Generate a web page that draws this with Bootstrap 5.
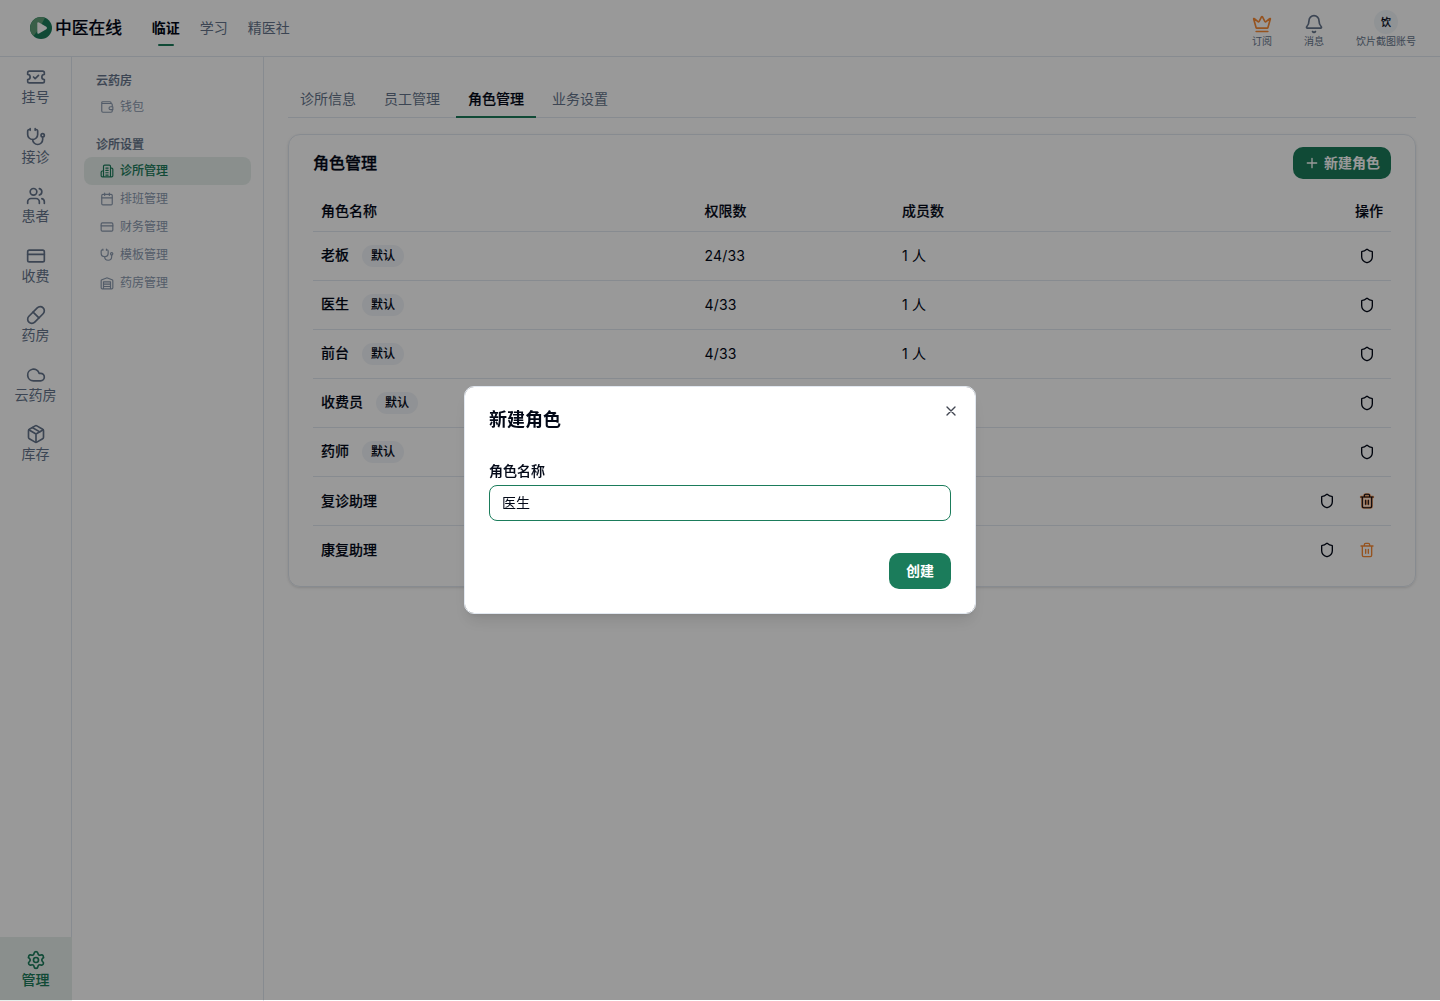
<!DOCTYPE html>
<html lang="zh-CN">
<head>
<meta charset="utf-8">
<meta name="viewport" content="width=device-width, initial-scale=1">
<title>角色管理 - 中医在线</title>
<link href="https://cdn.jsdelivr.net/npm/bootstrap@5.3.0/dist/css/bootstrap.min.css" rel="stylesheet">
<style>
:root{--line:#e2e8f0;--ink:#020817;--mute:#64748b;--brand:#1b7c5b;--tint:#e7efec}
body{font-family:Inter,"Noto Sans CJK SC",sans-serif;font-size:14px;line-height:20px;color:var(--ink);height:1001px;overflow:hidden;background:#fff}
.ico{fill:none;stroke:currentColor;stroke-width:2;stroke-linecap:round;stroke-linejoin:round;width:20px;height:20px;flex:none;display:block}
.ico-14{width:14px;height:14px}.ico-16{width:16px;height:16px}
.fw-mid{font-weight:500;-webkit-text-stroke:.15px}
.topbar{height:57px;border-bottom:1px solid var(--line);padding:0 24px 0 30px}
.brand-name{font-size:16.8px;font-weight:500;-webkit-text-stroke:.15px;line-height:24px;margin-left:3px}
.top-nav{gap:20px;margin-left:29.5px}
.top-nav a{color:var(--mute);text-decoration:none;position:relative;padding:0}
.top-nav a.on{color:var(--ink);font-weight:700}
.top-nav a.on::after{content:"";position:absolute;left:6px;right:6px;bottom:-8px;height:2px;border-radius:1px;background:var(--brand)}
.tool{font-size:10px;line-height:14px;color:var(--mute);margin-top:5px}
.tool + .tool{margin-left:32px}
.tool.tool-user{margin-top:1px}
.crown{color:#f98a35}
.face{width:24px;height:24px;border-radius:50%;background:#f1f5f9;color:var(--ink);font-size:10px}
.rail{width:72px;border-right:1px solid var(--line);color:var(--mute)}
.rail-item{height:59.5px;padding-top:10px;line-height:19.6px}
.rail-item.on{height:64px;padding-top:13px;padding-right:1px;background:var(--tint);color:var(--brand);font-weight:500;-webkit-text-stroke:.1px;margin-right:-1px}
.subnav{width:192px;border-right:1px solid var(--line);padding:12px;font-size:12px}
.subnav h6{font-size:12px;line-height:24px;font-weight:500;-webkit-text-stroke:.2px;color:var(--mute);margin:0;padding-left:12px}
.subnav h6.second{margin-top:12px}
.subnav a{height:28px;padding-left:16px;gap:6px;border-radius:8px;color:#8b9aaf;text-decoration:none}
.subnav a.on{background:var(--tint);color:var(--brand);font-weight:500;-webkit-text-stroke:.1px}
.content-pane{padding:24px}
.page-tabs{gap:4px;height:37px;border-bottom:1px solid var(--line)}
.page-tabs .nav-link{padding:8px 12px;height:37px;color:var(--mute);border-bottom:2px solid transparent}
.page-tabs .nav-link.active{color:var(--ink);font-weight:500;-webkit-text-stroke:.2px;border-bottom-color:var(--brand)}
.role-card{margin-top:16px;border:1px solid var(--line);border-radius:12px;padding:12px 24px;box-shadow:0 1px 3px rgba(0,0,0,.1),0 1px 2px -1px rgba(0,0,0,.1)}
.role-card h5{font-size:16px;line-height:24px;font-weight:500;-webkit-text-stroke:.3px}
.btn-brand{background:var(--brand);color:#fff;font-size:14px;line-height:20px;font-weight:600;border:0;border-radius:10px}
.btn-new{width:98px;height:32px;gap:4px;padding:0}
.role-table{margin:12px 0 0;table-layout:fixed;--bs-table-bg:transparent;--bs-table-color:var(--ink);color:var(--ink)}
.role-table th,.role-table td{padding:0 8px;height:49px;vertical-align:middle;border-bottom:1px solid var(--line)}
.role-table th{height:41px;font-weight:500;-webkit-text-stroke:.15px}
.role-table thead tr>th{height:40px}
.role-table tbody tr:last-child td{border-bottom:0;height:49px}
.role-table td.num{letter-spacing:.17px}
.role-table .tag{border-radius:11px;height:22px;padding:0 9px;background:#f1f4f8;font-size:12px;line-height:21px;margin:2px 0 0 13px;font-weight:500;-webkit-text-stroke:.1px}
.role-name{line-height:20px;margin-top:-2px}
.acts{gap:24px;padding-right:8px}
.scrim{height:1000px;background:#000}
.scrim.show{opacity:.4}
.role-modal{height:1000px;--bs-modal-width:512px;font-size:14px}
.role-modal .modal-dialog{height:1000px;min-height:0;margin:0 auto}
.role-modal .modal-content{height:228px;padding:24px;border:1px solid var(--line);border-radius:10px;color:var(--ink);box-shadow:0 10px 15px -3px rgba(0,0,0,.1),0 4px 6px -4px rgba(0,0,0,.1)}
.role-modal h2{font-size:18px;line-height:18px;font-weight:600;margin:0}
.role-modal .form-label{margin:32px 0 4px;font-weight:500;-webkit-text-stroke:.15px}
.role-modal .form-control{height:36px;border:1px solid var(--brand);border-radius:8px;padding:0 12px 2px;font-size:14px;color:var(--ink)}
.shut{position:absolute;right:16px;top:16px;border:0;background:none;padding:0;color:var(--ink);opacity:.75}
.btn-make{width:62px;height:36px;margin-top:32px;padding:0}
</style>
<script src="https://cdn.jsdelivr.net/npm/bootstrap@5.3.0/dist/js/bootstrap.bundle.min.js"></script>
</head>
<body class="d-flex flex-column">
<svg class="d-none" xmlns="http://www.w3.org/2000/svg">
<symbol id="ticket" viewBox="0 0 24 24"><path d="M2 9a3 3 0 1 1 0 6v2a2 2 0 0 0 2 2h16a2 2 0 0 0 2-2v-2a3 3 0 1 1 0-6V7a2 2 0 0 0-2-2H4a2 2 0 0 0-2 2Z"/><path d="m9 12 2 2 4-4"/></symbol>
<symbol id="stetho" viewBox="0 0 24 24"><path d="M11 2v2M5 2v2M5 3H4a2 2 0 0 0-2 2v4a6 6 0 0 0 12 0V5a2 2 0 0 0-2-2h-1"/><path d="M8 15a6 6 0 0 0 12 0v-3"/><circle cx="20" cy="10" r="2"/></symbol>
<symbol id="users" viewBox="0 0 24 24"><path d="M16 21v-2a4 4 0 0 0-4-4H6a4 4 0 0 0-4 4v2"/><circle cx="9" cy="7" r="4"/><path d="M22 21v-2a4 4 0 0 0-3-3.87M16 3.13a4 4 0 0 1 0 7.75"/></symbol>
<symbol id="credit" viewBox="0 0 24 24"><rect width="20" height="14" x="2" y="5" rx="2"/><path d="M2 10h20"/></symbol>
<symbol id="pill" viewBox="0 0 24 24"><path d="m10.5 20.5 10-10a4.95 4.95 0 1 0-7-7l-10 10a4.95 4.95 0 1 0 7 7Z"/><path d="m8.5 8.5 7 7"/></symbol>
<symbol id="cloud" viewBox="0 0 24 24"><path d="M17.5 19H9a7 7 0 1 1 6.71-9h1.79a4.5 4.5 0 1 1 0 9Z"/></symbol>
<symbol id="package" viewBox="0 0 24 24"><path d="m7.5 4.27 9 5.15"/><path d="M21 8a2 2 0 0 0-1-1.73l-7-4a2 2 0 0 0-2 0l-7 4A2 2 0 0 0 3 8v8a2 2 0 0 0 1 1.73l7 4a2 2 0 0 0 2 0l7-4A2 2 0 0 0 21 16Z"/><path d="m3.3 7 8.7 5 8.7-5M12 22V12"/></symbol>
<symbol id="gear" viewBox="0 0 24 24"><path d="M9.671 4.136a2.34 2.34 0 0 1 4.659 0 2.34 2.34 0 0 0 3.319 1.915 2.34 2.34 0 0 1 2.33 4.033 2.34 2.34 0 0 0 0 3.831 2.34 2.34 0 0 1-2.33 4.033 2.34 2.34 0 0 0-3.319 1.915 2.34 2.34 0 0 1-4.659 0 2.34 2.34 0 0 0-3.32-1.915 2.34 2.34 0 0 1-2.33-4.033 2.34 2.34 0 0 0 0-3.831A2.34 2.34 0 0 1 6.35 6.051a2.34 2.34 0 0 0 3.319-1.915"/><circle cx="12" cy="12" r="3"/></symbol>
<symbol id="crown" viewBox="0 0 24 24"><path d="M11.562 3.266a.5.5 0 0 1 .876 0L15.39 8.87a1 1 0 0 0 1.516.294L21.183 5.5a.5.5 0 0 1 .798.519l-2.834 10.246a1 1 0 0 1-.956.734H5.81a1 1 0 0 1-.957-.734L2.02 6.02a.5.5 0 0 1 .798-.519l4.276 3.664a1 1 0 0 0 1.516-.294zM5 21h14"/></symbol>
<symbol id="bell" viewBox="0 0 24 24"><path d="M10.268 21a2 2 0 0 0 3.464 0M3.262 15.326A1 1 0 0 0 4 17h16a1 1 0 0 0 .74-1.673C19.41 13.956 18 12.499 18 8A6 6 0 0 0 6 8c0 4.499-1.411 5.956-2.738 7.326"/></symbol>
<symbol id="wallet" viewBox="0 0 24 24"><path d="M22 11.500h-4a2.500 2.500 0 0 0 0 5h4zM21 11.500V8a2 2 0 0 0-2-2H4.500A1.500 1.500 0 0 1 3 4.500 1.500 1.500 0 0 1 4.500 3H17a2 2 0 0 1 2 2v1M3 4.500V19a2 2 0 0 0 2 2h14a2 2 0 0 0 2-2v-2.500"/></symbol>
<symbol id="hospital" viewBox="0 0 24 24"><path d="M6 22V4a2 2 0 0 1 2-2h8a2 2 0 0 1 2 2v18ZM6 12H4a2 2 0 0 0-2 2v6a2 2 0 0 0 2 2h2M18 7h2a2 2 0 0 1 2 2v11a2 2 0 0 1-2 2h-2M10 7h4M10 11h4M10 15h4M10 19h4"/></symbol>
<symbol id="calendar" viewBox="0 0 24 24"><path d="M8 2v4M16 2v4M3 10h18"/><rect width="18" height="18" x="3" y="4" rx="2"/></symbol>
<symbol id="warehouse" viewBox="0 0 24 24"><path d="M22 8.350V20a2 2 0 0 1-2 2H4a2 2 0 0 1-2-2V8.350A2 2 0 0 1 3.260 6.500l8-3.200a2 2 0 0 1 1.480 0l8 3.200A2 2 0 0 1 22 8.350ZM6 18h12M6 14h12M6 22V10h12v12"/></symbol>
<symbol id="shield" viewBox="0 0 24 24"><path d="M20 13c0 5-3.500 7.500-7.660 8.950a1 1 0 0 1-.67-.01C7.500 20.500 4 18 4 13V6a1 1 0 0 1 1-1c2 0 4.500-1.200 6.240-2.720a1.170 1.170 0 0 1 1.520 0C14.510 3.810 17 5 19 5a1 1 0 0 1 1 1z"/></symbol>
<symbol id="trash" viewBox="0 0 24 24"><path d="M3 6h18M19 6v14c0 1-1 2-2 2H7c-1 0-2-1-2-2V6M8 6V4c0-1 1-2 2-2h4c1 0 2 1 2 2v2M10 11v6M14 11v6"/></symbol>
</svg>

<header class="topbar d-flex align-items-center flex-shrink-0">
  <svg width="22" height="22" viewBox="0 0 22 22"><circle cx="11" cy="11" r="11" fill="#1b7c5b"/><path d="M15 .75A11 11 0 0 0 3.500 19L9 12Z" fill="#5f9f78"/><path d="M7.300 6.500Q7.300 4.500 9 5.500L16.300 9.800Q18 11 16.300 12.200L9 16.500Q7.300 17.500 7.300 15.500Z" fill="#fff"/></svg>
  <span class="brand-name">中医在线</span>
  <nav class="top-nav d-flex"><a class="on" href="#">临证</a><a href="#">学习</a><a href="#">精医社</a></nav>
  <div class="ms-auto d-flex">
    <div class="tool d-flex flex-column align-items-center"><svg class="ico crown"><use href="#crown"/></svg><span>订阅</span></div>
    <div class="tool d-flex flex-column align-items-center"><svg class="ico"><use href="#bell"/></svg><span>消息</span></div>
    <div class="tool tool-user d-flex flex-column align-items-center"><span class="face d-flex align-items-center justify-content-center fw-mid">饮</span><span>饮片截图账号</span></div>
  </div>
</header>

<div class="d-flex flex-grow-1">
  <aside class="rail d-flex flex-column flex-shrink-0 text-center">
    <div class="rail-item"><svg class="ico mx-auto"><use href="#ticket"/></svg>挂号</div>
    <div class="rail-item"><svg class="ico mx-auto"><use href="#stetho"/></svg>接诊</div>
    <div class="rail-item"><svg class="ico mx-auto"><use href="#users"/></svg>患者</div>
    <div class="rail-item"><svg class="ico mx-auto"><use href="#credit"/></svg>收费</div>
    <div class="rail-item"><svg class="ico mx-auto"><use href="#pill"/></svg>药房</div>
    <div class="rail-item"><svg class="ico mx-auto"><use href="#cloud"/></svg>云药房</div>
    <div class="rail-item"><svg class="ico mx-auto"><use href="#package"/></svg>库存</div>
    <div class="rail-item on mt-auto"><svg class="ico mx-auto"><use href="#gear"/></svg>管理</div>
  </aside>
  <aside class="subnav flex-shrink-0">
    <h6>云药房</h6>
    <a class="d-flex align-items-center" href="#"><svg class="ico ico-14"><use href="#wallet"/></svg>钱包</a>
    <h6 class="second">诊所设置</h6>
    <a class="on d-flex align-items-center" href="#"><svg class="ico ico-14"><use href="#hospital"/></svg>诊所管理</a>
    <a class="d-flex align-items-center" href="#"><svg class="ico ico-14"><use href="#calendar"/></svg>排班管理</a>
    <a class="d-flex align-items-center" href="#"><svg class="ico ico-14"><use href="#credit"/></svg>财务管理</a>
    <a class="d-flex align-items-center" href="#"><svg class="ico ico-14"><use href="#stetho"/></svg>模板管理</a>
    <a class="d-flex align-items-center" href="#"><svg class="ico ico-14"><use href="#warehouse"/></svg>药房管理</a>
  </aside>
  <main class="content-pane flex-grow-1">
    <nav class="nav page-tabs"><a class="nav-link" href="#">诊所信息</a><a class="nav-link" href="#">员工管理</a><a class="nav-link active" href="#">角色管理</a><a class="nav-link" href="#">业务设置</a></nav>
    <section class="role-card">
      <div class="d-flex align-items-center justify-content-between">
        <h5 class="mb-0">角色管理</h5>
        <button class="btn btn-brand btn-new d-flex align-items-center justify-content-center"><svg class="ico ico-16"><path d="M3.300 8h9.400M8 3.300v9.400" stroke-width="1.330"/></svg>新建角色</button>
      </div>
      <table class="table role-table">
        <colgroup><col style="width:383.500px"><col style="width:197.500px"><col style="width:240px"><col></colgroup>
        <thead><tr><th>角色名称</th><th>权限数</th><th>成员数</th><th class="text-end">操作</th></tr></thead>
        <tbody>
          <tr><td><div class="role-name d-flex align-items-center"><span class="fw-mid">老板</span><span class="tag">默认</span></div></td><td class="num">24/33</td><td class="num">1 人</td><td><div class="acts d-flex justify-content-end"><svg class="ico ico-16"><use href="#shield"/></svg></div></td></tr>
          <tr><td><div class="role-name d-flex align-items-center"><span class="fw-mid">医生</span><span class="tag">默认</span></div></td><td class="num">4/33</td><td class="num">1 人</td><td><div class="acts d-flex justify-content-end"><svg class="ico ico-16"><use href="#shield"/></svg></div></td></tr>
          <tr><td><div class="role-name d-flex align-items-center"><span class="fw-mid">前台</span><span class="tag">默认</span></div></td><td class="num">4/33</td><td class="num">1 人</td><td><div class="acts d-flex justify-content-end"><svg class="ico ico-16"><use href="#shield"/></svg></div></td></tr>
          <tr><td><div class="role-name d-flex align-items-center"><span class="fw-mid">收费员</span><span class="tag">默认</span></div></td><td></td><td></td><td><div class="acts d-flex justify-content-end"><svg class="ico ico-16"><use href="#shield"/></svg></div></td></tr>
          <tr><td><div class="role-name d-flex align-items-center"><span class="fw-mid">药师</span><span class="tag">默认</span></div></td><td></td><td></td><td><div class="acts d-flex justify-content-end"><svg class="ico ico-16"><use href="#shield"/></svg></div></td></tr>
          <tr><td class="fw-mid">复诊助理</td><td></td><td></td><td><div class="acts d-flex justify-content-end"><svg class="ico ico-16"><use href="#shield"/></svg><svg class="ico ico-16" viewBox="0 0 24 24"><use href="#trash" stroke="#f97316" stroke-width="3.600" opacity=".7"/><use href="#trash" stroke-width="1.600"/></svg></div></td></tr>
          <tr><td class="fw-mid">康复助理</td><td></td><td></td><td><div class="acts d-flex justify-content-end"><svg class="ico ico-16"><use href="#shield"/></svg><svg class="ico ico-16 crown"><use href="#trash"/></svg></div></td></tr>
        </tbody>
      </table>
    </section>
  </main>
</div>

<div class="modal-backdrop show scrim"></div>
<div class="modal show d-block role-modal overflow-hidden" role="dialog" aria-modal="true">
  <div class="modal-dialog modal-dialog-centered">
    <div class="modal-content">
      <h2>新建角色</h2>
      <button class="shut" aria-label="Close"><svg class="ico ico-16" viewBox="0 0 24 24"><path d="M18 6 6 18M6 6l12 12"/></svg></button>
      <label class="form-label" for="roleName">角色名称</label>
      <input id="roleName" class="form-control shadow-none" value="医生">
      <button class="btn btn-brand btn-make align-self-end">创建</button>
    </div>
  </div>
</div>
</body>
</html>
